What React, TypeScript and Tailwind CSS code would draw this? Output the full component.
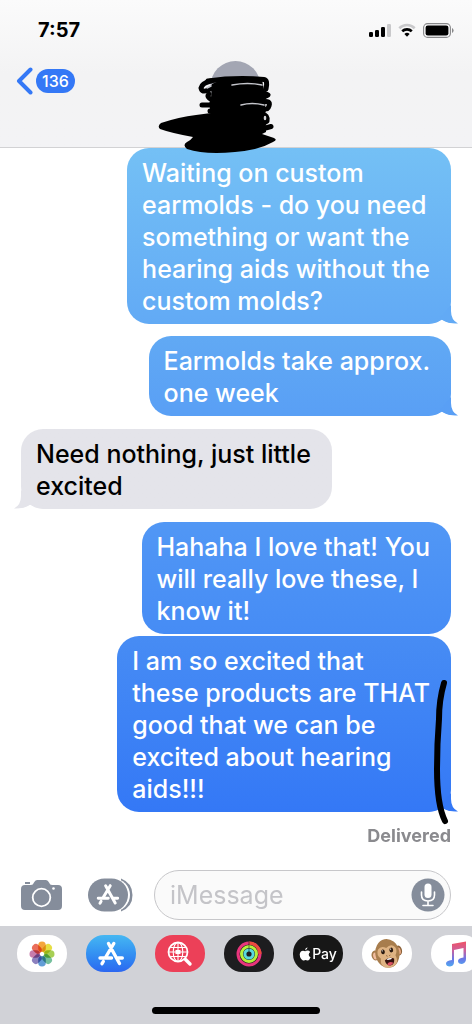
import type { ReactNode } from "react";

type Message = {
  id: number;
  from: "me" | "them";
  lines: string[];
  color: string;
  spacing: string;
  tail?: boolean;
  marked?: boolean;
};

const messages: Message[] = [
  {
    id: 1,
    from: "me",
    lines: ["Waiting on custom", "earmolds - do you need", "something or want the", "hearing aids without the", "custom molds?"],
    color: "from-[#74c0f5] to-[#62aaf5]",
    spacing: "",
    tail: true,
  },
  {
    id: 2,
    from: "me",
    lines: ["Earmolds take approx.", "one week"],
    color: "from-[#61a9f4] to-[#599ff5]",
    spacing: "mt-3",
    tail: true,
  },
  {
    id: 3,
    from: "them",
    lines: ["Need nothing, just little", "excited"],
    color: "from-[#e4e4ea] to-[#e4e4ea]",
    spacing: "mt-[13px]",
    tail: true,
  },
  {
    id: 4,
    from: "me",
    lines: ["Hahaha I love that! You", "will really love these, I", "know it!"],
    color: "from-[#5197f5] to-[#468cf5]",
    spacing: "mt-[13px]",
  },
  {
    id: 5,
    from: "me",
    lines: ["I am so excited that", "these products are THAT", "good that we can be", "excited about hearing", "aids!!!"],
    color: "from-[#478cf4] to-[#3478f6]",
    spacing: "mt-0.5",
    tail: true,
    marked: true,
  },
];

const tailColors: Record<number, string> = {
  1: "text-[#62aaf5]",
  2: "text-[#599ff5]",
  3: "text-[#e4e4ea]",
  5: "text-[#3478f6]",
};

function StatusBar() {
  return (
    <div className="flex h-[60px] items-center justify-between pr-[18px] pl-[38px]">
      <span className="text-[20px] font-bold leading-6">7:57</span>
      <div className="flex items-center gap-[7px]">
        <svg width="22" height="15" viewBox="0 0 22 15" aria-hidden="true">
          <rect x="0" y="9" width="4" height="5" rx="1.2" />
          <rect x="6" y="7" width="4" height="7" rx="1.2" />
          <rect x="12" y="4" width="4" height="10" rx="1.2" />
          <rect x="18" y="1" width="4" height="13" rx="1.2" fill="#c9c9cb" />
        </svg>
        <svg width="18" height="15" viewBox="0 0 18 15" fill="none" aria-hidden="true">
          <path d="M1.3 5.2a11 11 0 0 1 15.4 0" stroke="#c9c9cb" strokeWidth="2.6" />
          <path d="M4.2 8.3a7 7 0 0 1 9.6 0" stroke="#000" strokeWidth="2.6" />
          <path d="M6.4 10.9a3.8 3.8 0 0 1 5.2 0L9 13.8Z" fill="#000" />
        </svg>
        <svg width="31" height="15" viewBox="0 0 31 15" fill="none" aria-hidden="true">
          <rect x="0.6" y="0.6" width="26.8" height="13.8" rx="4" stroke="#88888a" strokeWidth="1.1" />
          <rect x="2.6" y="2.6" width="22.8" height="9.8" rx="2.2" fill="#000" />
          <path d="M29 5v5q1.6-.6 1.6-2.5T29 5Z" fill="#88888a" />
        </svg>
      </div>
    </div>
  );
}

function Scribble() {
  return (
    <svg className="absolute top-[60px] left-1/2 z-10 -ml-[78px]" width="122" height="94" viewBox="158 60 122 94" fill="none" aria-hidden="true">
      <circle cx="235.5" cy="86" r="25" fill="#a3a6b3" />
      <path
        fill="#000"
        d="M212 84Q222 79 240 80L262 80L265 94L266 132L262 134Q268 136 274 138Q278 140 273 142Q259 150 235 152Q205 155 187 149Q182 145 187 142Q191 140 193 137Q171 133 160 129Q157 126 161 123Q179 117 196 115L211 113L209 104L211 98Z"
      />
      <g stroke="#000" strokeWidth="5" strokeLinecap="round" strokeLinejoin="round">
        <path d="M208 81C222 79 246 78 264 79.500Q268 80 266 89" />
        <path d="M211 81Q202 83 201 88Q202 93 208 90L216 86" />
        <path d="M209 94Q206 97 212 100M262 92L268 95L262 98" />
        <path d="M202 105H216M262 102Q271 100 269 106Q268 110 262 110" />
        <path d="M210 111H218M262 114Q268 115 267 121L262 124M262 129L271 126.500" />
      </g>
      <path d="M207 88L211 86M232 85Q248 82 262 85M241 105Q252 102 264 105" stroke="#c4c5cb" strokeWidth="1.500" strokeLinecap="round" />
      <ellipse cx="265" cy="118" rx="1.3" ry="2.2" fill="#d5d5d8" />
      <ellipse cx="267" cy="112" rx="1.4" ry="0.7" fill="#d5d5d8" />
    </svg>
  );
}

function Header() {
  return (
    <header className="relative h-[148px] shrink-0 border-b border-[#d2d2d4] bg-linear-to-b from-[#fbfbfb] via-[#f3f3f4] to-[#f3f3f5]">
      <StatusBar />
      <button className="mt-[5px] ml-4 flex h-8 items-center gap-[3px]" aria-label="Back, 136 unread">
        <svg width="17" height="28" viewBox="0 0 17 28" fill="none" aria-hidden="true">
          <path d="M14.5 2.5L3 14L14.5 25.5" stroke="#3478f6" strokeWidth="4" strokeLinecap="round" strokeLinejoin="round" />
        </svg>
        <span className="flex h-6 items-center rounded-full bg-[#3478f6] px-[6px] text-base font-medium text-white">136</span>
      </button>
      <Scribble />
    </header>
  );
}

function Bubble({ message }: { message: Message }) {
  const mine = message.from === "me";
  return (
    <div
      className={`relative w-fit rounded-[22px] bg-linear-to-b pt-[9px] pr-[21px] pb-[7px] pl-[15px] text-[25px] leading-8 font-medium whitespace-nowrap ${message.color} ${message.spacing} ${mine ? "self-end text-white" : "self-start text-black"}`}
    >
      {message.lines.map((line) => (
        <span key={line} className="block">{line}</span>
      ))}
      {message.tail && (
        <svg
          className={`absolute bottom-0 ${tailColors[message.id]} ${mine ? "-right-[7px]" : "-left-[7px] -scale-x-100"}`}
          width="28"
          height="22"
          viewBox="0 0 28 22"
          aria-hidden="true"
        >
          <path fill="currentColor" d="M21 3V9Q21 18 28 21.5Q18 22 12 18L10 16Z" />
          <path fill="#fff" d="M2 22Q8 21 12 18Q17 21.5 24 22Z" />
        </svg>
      )}
      {message.marked && (
        <svg className="absolute -right-1 -bottom-[15px]" width="22" height="148" viewBox="0 0 22 148" fill="none" aria-hidden="true">
          <path d="M11 4Q6 21 6 40Q4 65 4 90Q4 126 12 142" stroke="#000" strokeWidth="6" strokeLinecap="round" />
        </svg>
      )}
    </div>
  );
}

// App Store "A", drawn on a 26x26 grid
function StoreMark() {
  return (
    <g stroke="#fff" strokeWidth="3.4" strokeLinecap="round" fill="none">
      <path d="M15.8 2.5L7.5 16.500M10.500 2.500L21.500 22.500M2 17H13.500M20 17H24.300M5.300 20.500L4 22.700" />
    </g>
  );
}

function Composer() {
  return (
    <form className="flex items-center px-[21px] py-[6px]" onSubmit={(e) => e.preventDefault()}>
      <button type="button" aria-label="Camera">
        <svg width="41" height="32" viewBox="0 0 41 32" aria-hidden="true">
          <path fill="#858d9b" d="M4 6H10Q12 6 13 3.5Q14 1 16 1H25Q27 1 28 3.5Q29 6 31 6H37Q41 6 41 10V27Q41 31 37 31H4Q0 31 0 27V10Q0 6 4 6ZM4 3H9V5H4Z" />
          <circle cx="20.5" cy="18.5" r="8.8" fill="none" stroke="#fff" strokeWidth="1.8" />
          <circle cx="32.5" cy="9.5" r="1.3" fill="#fff" />
        </svg>
      </button>
      <button type="button" className="ml-[26px]" aria-label="Apps">
        <svg width="45" height="34" viewBox="0 0 45 34" aria-hidden="true">
          <path fill="#858d9b" d="M33 .5Q44.500 5 44.500 17T33 33.500Z" />
          <rect x="1" y="0.5" width="41" height="33" rx="16.5" fill="#fff" />
          <rect x="0" y="0.5" width="40" height="33" rx="16.5" fill="#858d9b" />
          <g transform="translate(8.500 5.500) scale(.87)">
            <StoreMark />
          </g>
        </svg>
      </button>
      <div className="ml-[21px] flex h-[50px] min-w-0 flex-1 items-center rounded-full border border-[#c7c7ca] bg-[#fafafa] pr-[5px] pl-[15px]">
        <input
          type="text"
          aria-label="iMessage"
          placeholder="iMessage"
          className="min-w-0 flex-1 bg-transparent text-[25px] leading-8 outline-none placeholder:text-[#c4c4c8]"
        />
        <button type="button" aria-label="Dictate">
          <svg width="34" height="34" viewBox="0 0 34 34" fill="none" aria-hidden="true">
            <circle cx="17" cy="17" r="16.5" fill="#858d9b" />
            <rect x="13.5" y="5.5" width="7" height="14.5" rx="3.5" fill="#fff" />
            <path d="M10.5 14V17Q10.5 23 17 23T23.5 17V14M17 23V27M12 27.5H22" stroke="#fff" strokeWidth="1.6" strokeLinecap="round" />
          </svg>
        </button>
      </div>
    </form>
  );
}

function AppPill({ label, className, children }: { label: string; className: string; children: ReactNode }) {
  return (
    <button aria-label={label} className={`flex h-[37px] w-[50px] shrink-0 items-center justify-center overflow-hidden rounded-[18px] ${className}`}>
      {children}
    </button>
  );
}

const petals = ["#f29a22", "#e3d92a", "#9bc83e", "#62b790", "#4c8fd0", "#7c70b5", "#bf6aa0", "#e75a43"];

function PhotosIcon() {
  return (
    <svg width="26" height="26" viewBox="-13 -13 26 26" aria-hidden="true">
      {petals.map((fill, i) => (
        <rect key={fill} x="-3.8" y="-12.5" width="7.6" height="10.5" rx="3.8" fill={fill} fillOpacity="0.88" style={{ mixBlendMode: "multiply" }} transform={`rotate(${i * 45})`} />
      ))}
    </svg>
  );
}

function SearchIcon() {
  return (
    <svg width="26" height="26" viewBox="0 0 26 26" fill="none" stroke="#fff" aria-hidden="true">
      <circle cx="11" cy="11" r="9.5" strokeWidth="1.8" />
      <path d="M18.5 18.5L23 23" strokeWidth="3.4" strokeLinecap="round" />
      <ellipse cx="11" cy="11" rx="4.8" ry="9.5" strokeWidth="1.1" />
      <path d="M11 2V20M2 11H20M3.500 6.500H18.500M3.500 15.500H18.500" strokeWidth="1.1" />
      <path d="M8.500 9H13.500V13H8.500Z" fill="#fff" stroke="none" />
    </svg>
  );
}

function ActivityIcon() {
  return (
    <svg width="26" height="26" viewBox="0 0 26 26" fill="none" strokeWidth="3" aria-hidden="true">
      <circle cx="13" cy="13" r="11" stroke="#e8357c" />
      <path d="M13 2A11 11 0 0 1 24 13" stroke="#ed4a3d" />
      <circle cx="13" cy="13" r="7.5" stroke="#b5ef3c" />
      <circle cx="13" cy="13" r="4.1" stroke="#59d9de" />
      <path d="M13 .5V11" stroke="#202022" strokeWidth="0.6" />
    </svg>
  );
}

function MonkeyIcon() {
  return (
    <svg width="32" height="32" viewBox="0 0 32 32" aria-hidden="true">
      <g transform="rotate(-12 16 16)">
        <ellipse cx="4.5" cy="15" rx="4" ry="5" fill="#a67b4c" />
        <ellipse cx="4.5" cy="15.5" rx="2.5" ry="3.5" fill="#f1bda0" />
        <ellipse cx="28" cy="15" rx="3.5" ry="5" fill="#8b6239" />
        <ellipse cx="28.2" cy="15.5" rx="2" ry="3.5" fill="#e6a883" />
        <ellipse cx="16.5" cy="15.5" rx="12" ry="14.5" fill="#a87d4d" />
        <path d="M8 10Q12 6 16.5 10Q22 6 25.5 11Q27 15 24 19Q27 29 16.5 30Q6 29 9 19Q5 15 8 10Z" fill="#dfb383" />
        <ellipse cx="12.5" cy="13" rx="1.9" ry="2.4" fill="#2c1b12" />
        <ellipse cx="21" cy="13" rx="1.9" ry="2.4" fill="#2c1b12" />
        <circle cx="12" cy="12" r="0.6" fill="#fff" />
        <circle cx="20.5" cy="12" r="0.6" fill="#fff" />
        <path d="M15 17.5L16 18.3M19 17.5L18 18.3" stroke="#76502f" strokeWidth="0.9" />
        <path d="M12.5 22Q17 18.5 22 22Q21.5 28.5 17 28Q13 27.500 12.5 22Z" fill="#35120f" />
        <path d="M14 26Q17 23 20.5 26Q18.5 28 16.8 28T14 26Z" fill="#df5263" />
        <path d="M14.5 21Q17 20 20 21L19 22H15.5Z" fill="#fff" />
      </g>
    </svg>
  );
}

function MusicIcon() {
  return (
    <svg width="22" height="26" viewBox="0 0 22 26" aria-hidden="true">
      <defs>
        <linearGradient id="note" x1="0" y1="0" x2="0" y2="1">
          <stop offset="0" stopColor="#ef5265" />
          <stop offset="0.35" stopColor="#cd609b" />
          <stop offset="0.7" stopColor="#6978e8" />
          <stop offset="1" stopColor="#50a8ef" />
        </linearGradient>
      </defs>
      <path fill="url(#note)" d="M7 3L21 .5V18Q21 22 17 23Q13 23 13 20Q13 17 18.5 16.5V7L9 9V21Q9 25 5 25.5Q1 25.5 1 22.5Q1 19.5 7 19Z" />
    </svg>
  );
}

function AppStrip() {
  return (
    <div className="bg-[#d1d2d7] pt-[9px]">
      <nav className="flex gap-[19px] overflow-hidden pl-[17px]" aria-label="iMessage apps">
        <AppPill label="Photos" className="bg-white"><PhotosIcon /></AppPill>
        <AppPill label="App Store" className="bg-linear-to-b from-[#46b7f2] to-[#2c67f0]">
          <svg width="26" height="26" viewBox="0 0 26 26" aria-hidden="true"><StoreMark /></svg>
        </AppPill>
        <AppPill label="Images" className="bg-[#ec4058]"><SearchIcon /></AppPill>
        <AppPill label="Activity" className="bg-[#1d1d1f]"><ActivityIcon /></AppPill>
        <AppPill label="Apple Pay" className="gap-px bg-[#171717] text-white">
          <svg width="12" height="14" viewBox="0 0 12 14" fill="currentColor" aria-hidden="true">
            <path d="M8.5.3Q8.5 2.9 6 3.5Q6 1.1 8.5.3ZM6.2 4.3Q7.2 3.6 8.5 3.6Q10.2 3.6 11.2 5Q9.7 6 9.7 7.7Q9.7 9.5 11.6 10.3Q10.4 13.5 8.7 13.5Q7.4 13 6.3 13Q5 13.5 4 13.5Q1 12 .7 7.6Q1 3.8 4.1 3.7Q5 3.7 6.2 4.3Z" />
          </svg>
          <span className="text-sm font-medium">Pay</span>
        </AppPill>
        <AppPill label="Animoji" className="bg-white"><MonkeyIcon /></AppPill>
        <AppPill label="Music" className="bg-white"><MusicIcon /></AppPill>
      </nav>
      <div className="mx-auto mt-[35px] mb-[10px] h-[7px] w-[168px] rounded-full bg-black" />
    </div>
  );
}

export default function App() {
  return (
    <div className="flex min-h-screen flex-col overflow-hidden bg-white font-['Inter','Liberation_Sans',sans-serif] text-black">
      <Header />
      <main className="flex flex-1 flex-col px-[21px]">
        {messages.map((message) => (
          <Bubble key={message.id} message={message} />
        ))}
        <p className="mt-3 self-end text-lg leading-6 font-bold text-[#8a8a8e]">Delivered</p>
      </main>
      <Composer />
      <AppStrip />
    </div>
  );
}
